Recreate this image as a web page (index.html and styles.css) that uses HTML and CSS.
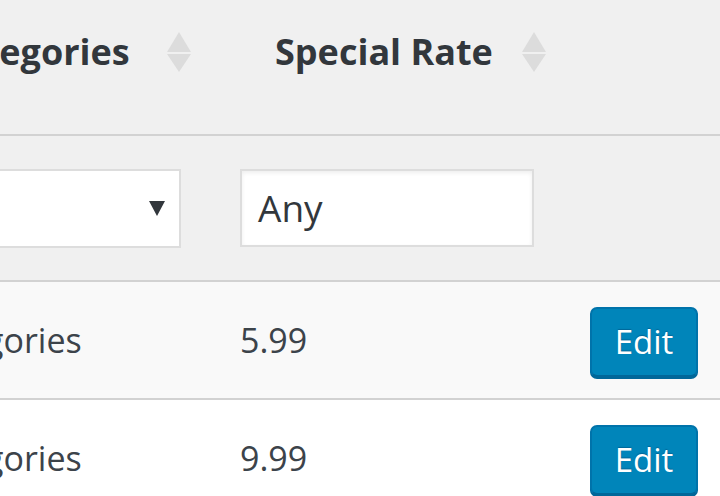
FILE: index.html
```html
<!DOCTYPE html>
<html>
<head>
<meta charset="utf-8">
<link rel="stylesheet" href="styles.css">
</head>
<body>
<div class="table">
  <div class="row head">
    <div class="cell c1"><span class="th th1">Categories</span><span class="sort"><i class="up"></i><i class="down"></i></span></div>
    <div class="cell c2"><span class="th th2">Special Rate</span><span class="sort sort2"><i class="up"></i><i class="down"></i></span></div>
    <div class="cell c3"></div>
  </div>
  <div class="row filter">
    <div class="cell c1"><div class="select"><span class="caret"></span></div></div>
    <div class="cell c2"><div class="input">Any</div></div>
    <div class="cell c3"></div>
  </div>
  <div class="row item alt">
    <div class="cell c1"><span class="td name">All Categories</span></div>
    <div class="cell c2"><span class="td">5.99</span></div>
    <div class="cell c3"><button class="btn">Edit</button></div>
  </div>
  <div class="row item">
    <div class="cell c1"><span class="td name">All Categories</span></div>
    <div class="cell c2"><span class="td">9.99</span></div>
    <div class="cell c3"><button class="btn">Edit</button></div>
  </div>
</div>
</body>
</html>
```

FILE: styles.css
```css
html, body {
  margin: 0;
  padding: 0;
  background: #ffffff;
  overflow: hidden;
  width: 720px;
  height: 496px;
}
body {
  font-family: "Open Sans", "Noto Sans", sans-serif;
  color: #32373c;
}
.table {
  margin-left: -200px;
  width: 920px;
}
.row {
  display: grid;
  grid-template-columns: 410px 350px 160px;
  border-bottom: 2px solid #d2d2d2;
}
.cell {
  display: flex;
  align-items: center;
  padding-left: 30px;
}
.head {
  height: 134px;
  background: #f0f0f0;
}
.head .cell {
  align-items: flex-start;
  padding-top: 28px;
}
.th {
  font-weight: 700;
  font-size: 36px;
  line-height: 48px;
  color: #32373c;
  white-space: nowrap;
}
.th1 { margin-left: 109px; }
.th2 { margin-left: 35px; }
.sort {
  display: flex;
  flex-direction: column;
  gap: 2px;
  margin-left: 37px;
  margin-top: 4px;
}
.sort2 { margin-left: 29px; }
.up, .down {
  display: block;
  width: 0;
  height: 0;
  border-left: 12px solid transparent;
  border-right: 12px solid transparent;
}
.up { border-bottom: 20px solid #dcdcdc; }
.down { border-top: 18px solid #dcdcdc; }
.filter {
  height: 144px;
  background: #f0f0f0;
}
.select {
  width: 333px;
  height: 75px;
  background: #fff;
  border: 2px solid #dddddd;
  display: flex;
  align-items: center;
  justify-content: flex-end;
  padding-right: 14px;
  box-sizing: content-box;
}
.caret {
  width: 0;
  height: 0;
  border-left: 8px solid transparent;
  border-right: 8px solid transparent;
  border-top: 15px solid #32373c;
}
.input {
  width: 294px;
  height: 78px;
  background: #fff;
  border: 2px solid #dddddd;
  box-shadow: inset 0 2px 4px rgba(0,0,0,0.07);
  font-size: 37px;
  line-height: 74px;
  padding-left: 16px;
  box-sizing: border-box;
  color: #32373c;
}
.item {
  height: 116px;
}
.alt { background: #f9f9f9; }
.td {
  font-size: 34px;
  color: #3c434a;
  white-space: nowrap;
}
.name { margin-left: 36px; }
.c3 {
  justify-content: flex-end;
  padding-right: 22px;
}
.btn {
  width: 109px;
  height: 70px;
  margin-top: 3px;
  background: #0085ba;
  border: 2px solid #0073aa;
  border-bottom-color: #006799;
  border-radius: 7px;
  box-shadow: 0 2px 0 #006799;
  color: #fff;
  font-family: "Open Sans", "Noto Sans", sans-serif;
  font-size: 33px;
  padding: 0;
  text-shadow: 0 -1px 1px #006799;
}
```
